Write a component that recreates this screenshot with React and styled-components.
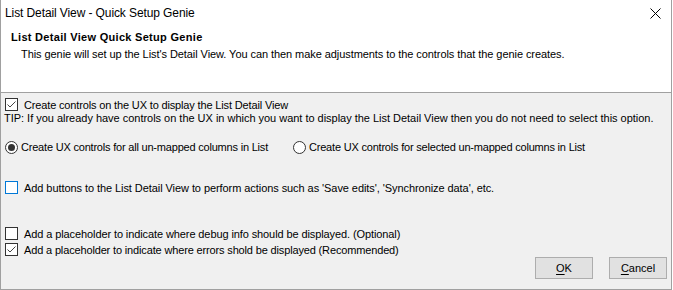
import React from "react";
import styled, { createGlobalStyle } from "styled-components";

const GlobalStyle = createGlobalStyle`
  html, body {
    margin: 0;
    padding: 0;
    background: #ffffff;
  }
  body {
    font-family: "Liberation Sans", Arial, sans-serif;
    font-size: 11px;
    color: #000000;
  }
`;

const Window = styled.div`
  width: 672px;
  height: 290px;
  box-sizing: border-box;
  border: 1px solid #a0a0a0;
  border-top: none;
  display: flex;
  flex-direction: column;
  background: #f0f0f0;
`;

const TitleBar = styled.div`
  height: 28px;
  display: flex;
  align-items: center;
  justify-content: space-between;
  padding: 0 10px 0 4px;
  background: #ffffff;
`;

const Title = styled.span`
  font-size: 12px;
  letter-spacing: -0.1px;
  padding-bottom: 2px;
`;

const CloseButton = styled.button`
  width: 12px;
  height: 12px;
  padding: 0;
  border: none;
  background: transparent;
  display: flex;
  align-items: center;
  justify-content: center;
  margin-bottom: 2px;
`;

const Header = styled.div`
  height: 65px;
  box-sizing: border-box;
  background: #ffffff;
  border-bottom: 1px solid #a0a0a0;
  padding: 2px 0 0 10px;
`;

const HeaderTitle = styled.div`
  font-weight: bold;
  font-size: 11px;
  letter-spacing: 0.3px;
  line-height: 14px;
`;

const HeaderText = styled.div`
  margin: 3px 0 0 10px;
  line-height: 14px;
  letter-spacing: -0.07px;
`;

const Body = styled.div`
  flex: 1;
  display: flex;
  flex-direction: column;
  padding: 0 0 0 3px;
`;

const Row = styled.div`
  display: flex;
  align-items: center;
  height: ${(p) => p.$h || 13}px;
  margin-top: ${(p) => p.$top || 0}px;
`;

const Label = styled.span`
  margin-left: ${(p) => (p.$gap !== undefined ? p.$gap : 6)}px;
  letter-spacing: ${(p) => p.$ls ?? -0.1}px;
  white-space: nowrap;
`;

const Tip = styled.div`
  line-height: 14px;
  letter-spacing: -0.02px;
  white-space: nowrap;
`;

const Box = styled.span`
  width: 13px;
  height: 13px;
  box-sizing: border-box;
  margin-left: 1px;
  border: 1px solid ${(p) => (p.$focus ? "#0078d7" : "#333333")};
  background: #ffffff;
  display: flex;
  align-items: center;
  justify-content: center;
  flex-shrink: 0;
`;

const RadioGroup = styled.div`
  display: flex;
  align-items: center;
  width: ${(p) => p.$w || "auto"};
`;

const Circle = styled.span`
  width: 13px;
  height: 13px;
  box-sizing: border-box;
  margin-left: 1px;
  border-radius: 50%;
  border: 1px solid #333333;
  background: #ffffff;
  display: flex;
  align-items: center;
  justify-content: center;
  flex-shrink: 0;
`;

const Dot = styled.span`
  width: 7px;
  height: 7px;
  border-radius: 50%;
  background: #333333;
`;

const Footer = styled.div`
  display: flex;
  justify-content: flex-end;
  gap: 16px;
  margin-top: 1px;
  padding-right: 4px;
`;

const Button = styled.button`
  width: 58px;
  height: 22px;
  box-sizing: border-box;
  border: 1px solid #adadad;
  background: #e1e1e1;
  font-family: inherit;
  font-size: 11px;
  color: #000000;
  padding: 0;
  u {
    text-decoration: underline;
    text-underline-offset: 2px;
  }
`;

function Check({ checked, focus }) {
  return (
    <Box $focus={focus}>
      {checked && (
        <svg width="11" height="11" viewBox="0 0 11 11">
          <path d="M1.5 5.5 L4 8 L9.5 2.5" fill="none" stroke="#444444" strokeWidth="1" />
        </svg>
      )}
    </Box>
  );
}

function Radio({ checked }) {
  return <Circle>{checked && <Dot />}</Circle>;
}

export default function App() {
  return (
    <>
      <GlobalStyle />
      <Window>
        <TitleBar>
          <Title>List Detail View - Quick Setup Genie</Title>
          <CloseButton aria-label="Close">
            <svg width="11" height="11" viewBox="0 0 11 11">
              <path d="M0.5 0.5 L10.5 10.5 M10.5 0.5 L0.5 10.5" stroke="#000000" strokeWidth="1" />
            </svg>
          </CloseButton>
        </TitleBar>
        <Header>
          <HeaderTitle>List Detail View Quick Setup Genie</HeaderTitle>
          <HeaderText>
            This genie will set up the List's Detail View. You can then make adjustments to the controls that the genie creates.
          </HeaderText>
        </Header>
        <Body>
          <Row $top={5}>
            <Check checked />
            <Label $ls={-0.15}>Create controls on the UX to display the List Detail View</Label>
          </Row>
          <Tip>
            TIP: If you already have controls on the UX in which you want to display the List Detail View then you do not need to select this option.
          </Tip>
          <Row $top={15} $h={14}>
            <RadioGroup $w="288px">
              <Radio checked />
              <Label $gap={3} $ls={-0.2}>Create UX controls for all un-mapped columns in List</Label>
            </RadioGroup>
            <RadioGroup>
              <Radio />
              <Label $gap={3} $ls={-0.2}>Create UX controls for selected un-mapped columns in List</Label>
            </RadioGroup>
          </Row>
          <Row $top={27}>
            <Check focus />
            <Label $ls={-0.07}>Add buttons to the List Detail View to perform actions such as 'Save edits', 'Synchronize data', etc.</Label>
          </Row>
          <Row $top={33}>
            <Check />
            <Label $ls={-0.1}>Add a placeholder to indicate where debug info should be displayed. (Optional)</Label>
          </Row>
          <Row $top={3}>
            <Check checked />
            <Label $ls={-0.15}>Add a placeholder to indicate where errors shold be displayed (Recommended)</Label>
          </Row>
          <Footer>
            <Button>
              <u>O</u>K
            </Button>
            <Button>
              <u>C</u>ancel
            </Button>
          </Footer>
        </Body>
      </Window>
    </>
  );
}
